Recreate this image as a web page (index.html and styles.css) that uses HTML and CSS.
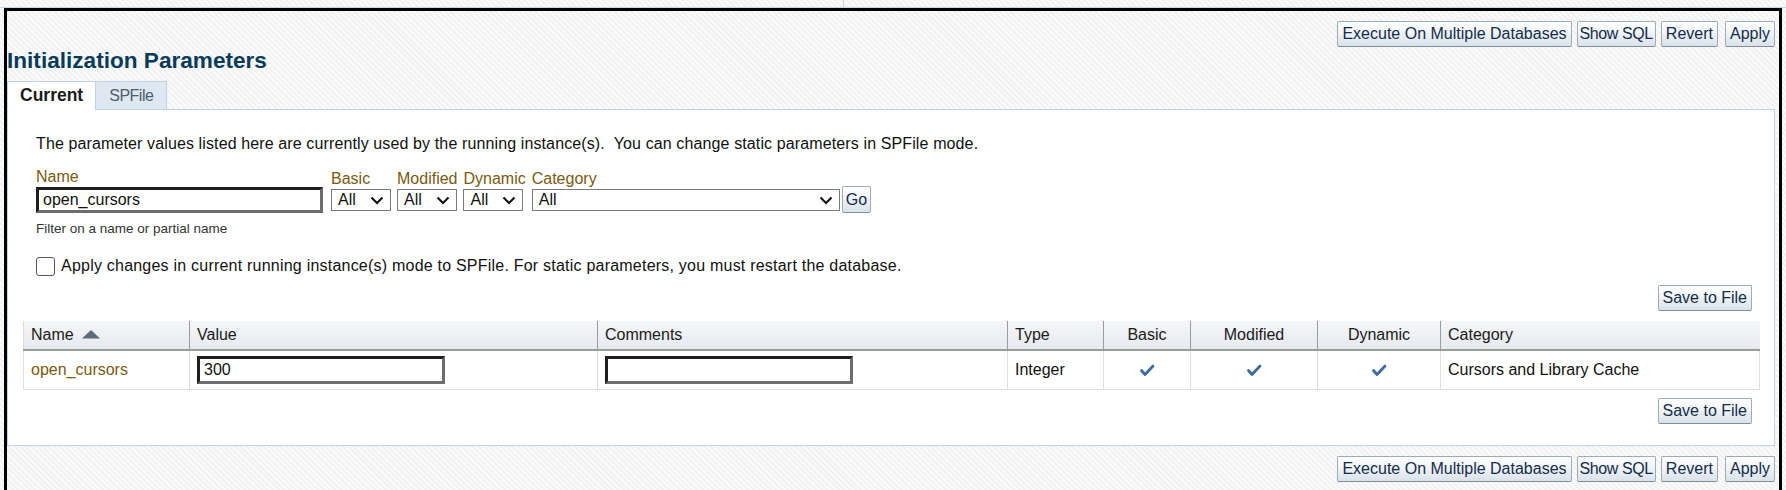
FILE: index.html
```html
<!DOCTYPE html>
<html lang="en">
<head>
<meta charset="utf-8">
<title>Initialization Parameters</title>
<link rel="stylesheet" href="styles.css">
</head>
<body>
<div class="topstrip"><div class="ts-left"></div><div class="ts-right"></div></div>
<div class="frame">
  <div class="toolbar">
    <button class="btn">Execute On Multiple Databases</button>
    <button class="btn btn-sql">Show SQL</button>
    <button class="btn">Revert</button>
    <button class="btn btn-apply">Apply</button>
  </div>
  <h1 class="title">Initialization Parameters</h1>
  <div class="tabs">
    <div class="tab tab-active">Current</div>
    <div class="tab">SPFile</div>
  </div>
  <div class="panel">
    <div class="filters">
      <p class="desc">The parameter values listed here are currently used by the running instance(s).&nbsp; You can change static parameters in SPFile mode.</p>
      <div class="filter-row">
        <div class="field field-name">
          <span class="flabel">Name</span>
          <input class="txt txt-name" type="text" value="open_cursors">
        </div>
        <div class="field field-sel">
          <span class="flabel">Basic</span>
          <div class="sel sel-small"><span>All</span><svg class="chev" width="14" height="9" viewBox="0 0 14 9"><path d="M1.5 1.5 L7 7 L12.5 1.5" fill="none" stroke="#111" stroke-width="2"/></svg></div>
        </div>
        <div class="field field-sel">
          <span class="flabel">Modified</span>
          <div class="sel sel-small"><span>All</span><svg class="chev" width="14" height="9" viewBox="0 0 14 9"><path d="M1.5 1.5 L7 7 L12.5 1.5" fill="none" stroke="#111" stroke-width="2"/></svg></div>
        </div>
        <div class="field field-sel">
          <span class="flabel">Dynamic</span>
          <div class="sel sel-small"><span>All</span><svg class="chev" width="14" height="9" viewBox="0 0 14 9"><path d="M1.5 1.5 L7 7 L12.5 1.5" fill="none" stroke="#111" stroke-width="2"/></svg></div>
        </div>
        <div class="field field-sel field-cat">
          <span class="flabel">Category</span>
          <div class="sel sel-cat"><span>All</span><svg class="chev" width="14" height="9" viewBox="0 0 14 9"><path d="M1.5 1.5 L7 7 L12.5 1.5" fill="none" stroke="#111" stroke-width="2"/></svg></div>
        </div>
        <button class="btn btn-go">Go</button>
      </div>
      <div class="hint">Filter on a name or partial name</div>
      <div class="chk-row"><span class="chk"></span><span class="chk-text">Apply changes in current running instance(s) mode to SPFile. For static parameters, you must restart the database.</span></div>
    </div>
    <div class="results">
      <div class="btn-row"><button class="btn">Save to File</button></div>
      <table class="grid">
        <thead>
          <tr>
            <th class="c-name">Name <svg class="sort" width="20" height="10" viewBox="0 0 20 10"><polygon points="1,9.5 10,1 19,9.5" fill="#5d6b7b"/></svg></th>
            <th class="c-value">Value</th>
            <th class="c-comments">Comments</th>
            <th class="c-type">Type</th>
            <th class="c-basic center">Basic</th>
            <th class="c-mod center">Modified</th>
            <th class="c-dyn center">Dynamic</th>
            <th class="c-cat">Category</th>
          </tr>
        </thead>
        <tbody>
          <tr>
            <td class="pname">open_cursors</td>
            <td><input class="txt txt-cell" type="text" value="300"></td>
            <td><input class="txt txt-cell" type="text" value=""></td>
            <td>Integer</td>
            <td class="center"><svg class="check" width="16" height="13" viewBox="0 0 16 13"><path d="M2.5 6.5 L6 10.5 L14 2" fill="none" stroke="#3d6c9c" stroke-width="2.8" stroke-linecap="round" stroke-linejoin="round"/></svg></td>
            <td class="center"><svg class="check" width="16" height="13" viewBox="0 0 16 13"><path d="M2.5 6.5 L6 10.5 L14 2" fill="none" stroke="#3d6c9c" stroke-width="2.8" stroke-linecap="round" stroke-linejoin="round"/></svg></td>
            <td class="center"><svg class="check" width="16" height="13" viewBox="0 0 16 13"><path d="M2.5 6.5 L6 10.5 L14 2" fill="none" stroke="#3d6c9c" stroke-width="2.8" stroke-linecap="round" stroke-linejoin="round"/></svg></td>
            <td>Cursors and Library Cache</td>
          </tr>
        </tbody>
      </table>
      <div class="btn-row btn-row-bottom"><button class="btn">Save to File</button></div>
    </div>
  </div>
  <div class="toolbar toolbar-bottom">
    <button class="btn">Execute On Multiple Databases</button>
    <button class="btn btn-sql">Show SQL</button>
    <button class="btn">Revert</button>
    <button class="btn btn-apply">Apply</button>
  </div>
</div>
</body>
</html>
```
FILE: styles.css
```css
* { box-sizing: border-box; }

html, body {
  margin: 0;
  padding: 0;
  height: 100%;
  overflow: hidden;
}

body {
  font-family: "Liberation Sans", Arial, sans-serif;
  font-size: 16px;
  color: #111;
  background: repeating-linear-gradient(45deg, #f2f2f2 0 2px, #fafafa 2px 4px);
}

.topstrip {
  display: flex;
  height: 8px;
  border-bottom: 1px solid #c9d6e3;
}
.ts-left {
  width: 844px;
  border-right: 1px solid #c9d6e3;
}
.ts-right { flex: 1; }

.frame {
  margin-left: 4px;
  width: 1778px;
  height: 482px;
  border: 3px solid #000;
  border-bottom: none;
  padding: 0 4px 0 0;
  display: flex;
  flex-direction: column;
}

.toolbar {
  display: flex;
  justify-content: flex-end;
  gap: 5px;
  padding-top: 10px;
}
.toolbar-bottom { padding-top: 10px; }
.btn-apply { margin-left: 2px; }

.btn {
  height: 26px;
  padding: 0 4px;
  font-family: "Liberation Sans", Arial, sans-serif;
  font-size: 16px;
  line-height: 24px;
  color: #122c4d;
  background: linear-gradient(#ffffff, #f1f4f8 45%, #d9e1ea);
  border: 1px solid #9eabb9;
  border-bottom-color: #7f8d9c;
  border-radius: 2px;
  white-space: nowrap;
}
.btn-sql { padding: 0 2px; letter-spacing: -0.4px; }

.title {
  margin: 2px 0 0 0;
  font-size: 22.6px;
  line-height: 24px;
  font-weight: bold;
  color: #073a5b;
}

.tabs {
  display: flex;
  margin-top: 8px;
  margin-bottom: -1px;
  position: relative;
  z-index: 1;
}
.tab {
  height: 29px;
  padding: 0 13px;
  line-height: 27px;
  font-size: 16px;
  letter-spacing: -0.5px;
  color: #4c5d70;
  background: #dfe7f0;
  border: 1px solid #c3d2e2;
}
.tab-active {
  background: #fff;
  color: #1a1a1a;
  font-weight: bold;
  font-size: 17.5px;
  letter-spacing: 0;
  border-color: #c3d2e2;
  border-bottom-color: #fff;
  border-right: none;
  padding: 0 12px;
}

.panel {
  background: #fff;
  border: 1px solid #c3d2e2;
  padding: 24px 15px 19px 15px;
  height: 337px;
}

.filters { padding-left: 13px; }

.desc {
  margin: 0;
  line-height: 20px;
  letter-spacing: 0.12px;
}

.filter-row {
  display: flex;
  align-items: flex-end;
  margin-top: 13px;
}
.field {
  display: flex;
  flex-direction: column;
}
.field-name { margin-right: 8px; }
.field-sel { margin-right: 6px; padding-bottom: 2px; }
.field-cat { margin-right: 2px; }

.flabel {
  color: #7a5a0e;
  line-height: 20px;
  font-size: 16px;
}

.txt {
  font-family: "Liberation Sans", Arial, sans-serif;
  font-size: 16px;
  color: #111;
  background: #fff;
  border-style: solid;
  border-width: 3px;
  border-color: #1f1f1f #6d6d6d #6d6d6d #1f1f1f;
  padding: 0 4px;
  outline: none;
}
.txt-name {
  width: 287px;
  height: 26px;
}

.sel {
  display: flex;
  align-items: center;
  justify-content: space-between;
  height: 22px;
  border: 1px solid #7b7b7b;
  padding: 0 6px 0 6px;
  background: #fff;
  font-size: 16px;
}
.sel-small { width: 60px; }
.sel-cat { width: 308px; }
.chev { display: block; }

.btn-go {
  height: 27px;
  padding: 0 3px;
}

.hint {
  margin-top: 7px;
  font-size: 13.5px;
  line-height: 17px;
  color: #333;
}

.chk-row {
  display: flex;
  align-items: center;
  gap: 6px;
  margin-top: 19px;
  line-height: 20px;
}
.chk-text { letter-spacing: 0.22px; }
.chk {
  width: 19px;
  height: 19px;
  border: 1.5px solid #555;
  border-radius: 3px;
  background: #fff;
}

.btn-row {
  display: flex;
  justify-content: flex-end;
  margin-top: 9px;
  padding-right: 7px;
}
.btn-row-bottom { margin-top: 8px; }

.grid {
  margin-top: 10px;
  width: 1736px;
  border-collapse: collapse;
  table-layout: fixed;
  font-size: 16px;
}
.grid th {
  height: 29px;
  padding: 0 7px;
  text-align: left;
  font-weight: normal;
  color: #1b1b1b;
  background: linear-gradient(#f6f7f9, #e5e9ee);
  border-left: 1px solid #9c9c9c;
  border-bottom: 2px solid #9a9a9a;
  white-space: nowrap;
}
.grid th:first-child { border-left: 1px solid #dcdcdc; }
.grid td {
  height: 39px;
  padding: 0 7px;
  border: 1px solid #dedede;
  border-top: none;
  white-space: nowrap;
}
.grid .center { text-align: center; }

.c-name { width: 166px; }
.c-value { width: 408px; }
.c-comments { width: 410px; }
.c-type { width: 96px; }
.c-basic { width: 87px; }
.c-mod { width: 127px; }
.c-dyn { width: 123px; }
.c-cat { width: 319px; }

.sort {
  vertical-align: 1px;
  margin-left: 3px;
}

.pname { color: #7a5a0e; }

.txt-cell {
  width: 248px;
  height: 28px;
  display: block;
}

.check { vertical-align: middle; }
```
